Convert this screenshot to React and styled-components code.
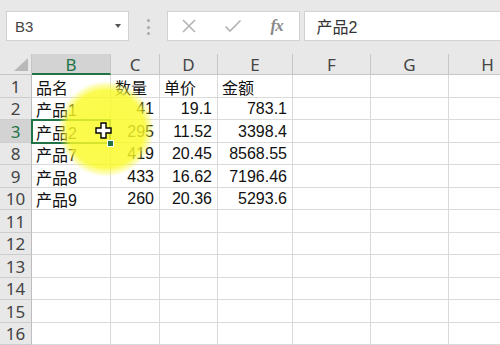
import React from "react";
import styled, { createGlobalStyle } from "styled-components";

const GlobalStyle = createGlobalStyle`
  html, body {
    margin: 0;
    padding: 0;
    background: #e8e8e8;
    font-family: "Liberation Sans", "Noto Sans CJK SC", sans-serif;
  }
`;

const GREEN = "#217346";
const FONT = `"Liberation Sans", "Noto Sans CJK SC", sans-serif`;

const Frame = styled.div`
  position: relative;
  width: 500px;
  height: 345px;
  overflow: hidden;
  background: #e8e8e8;
  display: flex;
  flex-direction: column;
`;

const FormulaBar = styled.div`
  height: 54px;
  box-sizing: border-box;
  padding: 11px 0 0 6px;
  display: flex;
  align-items: flex-start;
  flex-shrink: 0;
`;

const Box = styled.div`
  height: 30px;
  box-sizing: border-box;
  background: #fff;
  border: 1px solid #d2d2d2;
  display: flex;
  align-items: center;
`;

const NameBox = styled(Box)`
  width: 123px;
  padding: 0 7px 0 8px;
  justify-content: space-between;
  font-size: 15px;
  color: #444;
`;

const Caret = styled.span`
  width: 0;
  height: 0;
  border-left: 3.5px solid transparent;
  border-right: 3.5px solid transparent;
  border-top: 4px solid #555;
`;

const Dots = styled.div`
  display: flex;
  flex-direction: column;
  gap: 3.5px;
  margin: 8px 17px 0 17.5px;
  span {
    width: 3px;
    height: 3px;
    border-radius: 50%;
    background: #a8a8a8;
  }
`;

const FuncBox = styled(Box)`
  width: 133px;
`;

const IconSlot = styled.div`
  width: 44px;
  display: flex;
  justify-content: center;
  align-items: center;
  color: #b4b4b4;
`;

const Fx = styled.span`
  font-family: "Liberation Serif", serif;
  font-style: italic;
  font-weight: bold;
  font-size: 17px;
  color: #8a8a8a;
  letter-spacing: -1px;
`;

const FormulaInput = styled(Box)`
  flex: 1;
  margin-left: 4px;
  margin-right: -4px;
  padding-left: 12px;
  font-size: 16px;
  color: #333;
`;

const Sheet = styled.div`
  display: grid;
  grid-template-columns: 32px 79px 49px 58px 75px 78px 78px 78px;
  grid-template-rows: 21px;
  grid-auto-rows: 22.5px;
  background: #fff;
  flex: 1;
`;

const ColHead = styled.div`
  box-sizing: border-box;
  background: ${(p) => (p.$active ? "#d3d3d3" : "#e8e8e8")};
  color: ${(p) => (p.$active ? GREEN : "#444")};
  border-right: 1px solid #c6c6c6;
  border-bottom: ${(p) => (p.$active ? `2px solid ${GREEN}` : "1px solid #c6c6c6")};
  font-family: "Noto Sans", sans-serif;
  font-size: 17px;
  display: flex;
  align-items: center;
  justify-content: center;
  padding-top: 1px;
`;

const Corner = styled(ColHead)`
  justify-content: flex-end;
  align-items: flex-end;
  padding: 0 3px 3px 0;
`;

const RowHead = styled.div`
  box-sizing: border-box;
  background: ${(p) => (p.$active ? "#d3d3d3" : "#e8e8e8")};
  color: ${(p) => (p.$active ? GREEN : "#444")};
  border-right: 1px solid #bdbdbd;
  border-bottom: 1px solid #cdcdcd;
  font-family: "Noto Sans", sans-serif;
  font-size: 17px;
  display: flex;
  align-items: center;
  justify-content: center;
  padding-top: 1px;
`;

const Cell = styled.div`
  position: relative;
  box-sizing: border-box;
  border-right: 1px solid #dadada;
  border-bottom: 1px solid #dadada;
  font-family: ${FONT};
  font-size: 16px;
  color: #111;
  display: flex;
  align-items: center;
  justify-content: ${(p) => (p.$num ? "flex-end" : "flex-start")};
  padding: 2px 5px 0 4px;
  white-space: nowrap;

  ${(p) =>
    p.$selected &&
    `
    &::after {
      content: "";
      position: absolute;
      left: -1px;
      top: -1px;
      right: -1px;
      bottom: -2px;
      border: 2px solid ${GREEN};
      pointer-events: none;
    }
    &::before {
      content: "";
      position: absolute;
      right: -4px;
      bottom: -5px;
      width: 5px;
      height: 5px;
      background: ${GREEN};
      border: 1px solid #fff;
      z-index: 2;
    }
  `}
`;

const Highlight = styled.div`
  position: absolute;
  left: 58px;
  top: 81px;
  width: 96px;
  height: 96px;
  border-radius: 50%;
  background: radial-gradient(
    circle closest-side,
    rgba(250, 250, 40, 0.85) 0%,
    rgba(250, 250, 40, 0.82) 80%,
    rgba(250, 250, 60, 0) 100%
  );
  pointer-events: none;
`;

const Cursor = styled.svg`
  position: absolute;
  left: 95px;
  top: 122px;
`;

const columns = ["B", "C", "D", "E", "F", "G", "H"];

const rows = [
  { n: 1, cells: ["品名", "数量", "单价", "金额"], head: true },
  { n: 2, cells: ["产品1", "41", "19.1", "783.1"] },
  { n: 3, cells: ["产品2", "295", "11.52", "3398.4"], active: true },
  { n: 8, cells: ["产品7", "419", "20.45", "8568.55"] },
  { n: 9, cells: ["产品8", "433", "16.62", "7196.46"] },
  { n: 10, cells: ["产品9", "260", "20.36", "5293.6"] },
  { n: 11, cells: [] },
  { n: 12, cells: [] },
  { n: 13, cells: [] },
  { n: 14, cells: [] },
  { n: 15, cells: [] },
  { n: 16, cells: [] },
];

export default function App() {
  return (
    <Frame>
      <GlobalStyle />
      <FormulaBar>
        <NameBox>
          <span>B3</span>
          <Caret />
        </NameBox>
        <Dots>
          <span />
          <span />
          <span />
        </Dots>
        <FuncBox>
          <IconSlot>
            <svg width="16" height="16" viewBox="0 0 16 16">
              <path d="M2 2 L14 14 M14 2 L2 14" stroke="currentColor" strokeWidth="1.6" fill="none" />
            </svg>
          </IconSlot>
          <IconSlot>
            <svg width="18" height="14" viewBox="0 0 18 14">
              <path d="M1.5 7.5 L6 12 L16.5 1.5" stroke="currentColor" strokeWidth="1.7" fill="none" />
            </svg>
          </IconSlot>
          <IconSlot>
            <Fx>fx</Fx>
          </IconSlot>
        </FuncBox>
        <FormulaInput>产品2</FormulaInput>
      </FormulaBar>

      <Sheet>
        <Corner>
          <svg width="14" height="13" viewBox="0 0 14 13">
            <polygon points="0,13 14,13 14,0" fill="#b9b9b9" />
          </svg>
        </Corner>
        {columns.map((c) => (
          <ColHead key={c} $active={c === "B"}>
            {c}
          </ColHead>
        ))}
        {rows.map((r) => (
          <React.Fragment key={r.n}>
            <RowHead $active={r.active}>{r.n}</RowHead>
            {columns.map((c, i) => (
              <Cell
                key={c}
                $num={!r.head && i > 0}
                $selected={r.active && i === 0}
              >
                {r.cells[i] || ""}
              </Cell>
            ))}
          </React.Fragment>
        ))}
      </Sheet>

      <Highlight />
      <Cursor width="17" height="17" viewBox="0 0 17 17">
        <path
          d="M6 1 H11 V6 H16 V11 H11 V16 H6 V11 H1 V6 H6 Z"
          fill="#fff"
          stroke="#000"
          strokeWidth="1.4"
        />
      </Cursor>
    </Frame>
  );
}
